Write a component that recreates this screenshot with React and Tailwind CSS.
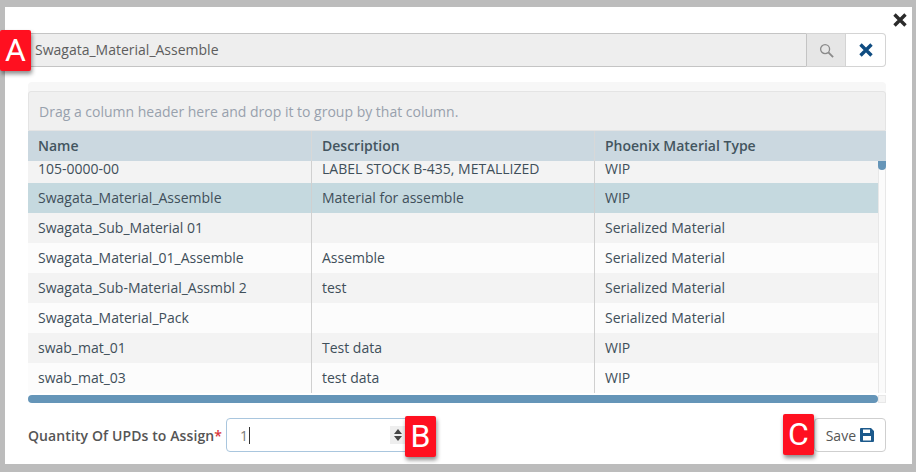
import React from 'react';

const rows = [
  { name: 'Swagata_Material_Assemble', desc: 'Material for assemble', type: 'WIP', selected: true },
  { name: 'Swagata_Sub_Material 01', desc: '', type: 'Serialized Material' },
  { name: 'Swagata_Material_01_Assemble', desc: 'Assemble', type: 'Serialized Material' },
  { name: 'Swagata_Sub-Material_Assmbl 2', desc: 'test', type: 'Serialized Material' },
  { name: 'Swagata_Material_Pack', desc: '', type: 'Serialized Material' },
  { name: 'swab_mat_01', desc: 'Test data', type: 'WIP' },
  { name: 'swab_mat_03', desc: 'test data', type: 'WIP' },
];

function Badge({ letter, className }) {
  return (
    <div className={`absolute w-[31px] h-[41px] bg-[#ff1020] rounded-[2px] text-white text-[32px] leading-[41px] text-center font-['Roboto',sans-serif] shadow-[1px_3px_4px_rgba(0,0,0,0.45)] ${className}`}>
      {letter}
    </div>
  );
}

function Cross({ className }) {
  return (
    <svg viewBox="0 0 14 14" className={className} fill="none" stroke="currentColor" strokeWidth="3.4">
      <path d="M1.5 1.5 12.5 12.5M12.5 1.5 1.5 12.5" />
    </svg>
  );
}

function Row({ name, desc, type, selected, index }) {
  const bg = selected ? 'bg-[#c5d9df]' : index % 2 === 1 ? 'bg-[#f3f3f3]' : 'bg-[#fcfcfc]';
  return (
    <div className={`grid grid-cols-[283px_283px_284px] h-[30px] text-[14px] leading-[30px] text-[#3f4f5a] ${bg}`}>
      <div className="pl-[10px] truncate">{name}</div>
      <div className="pl-[10px] border-l border-[#d0d0d0] truncate">{desc}</div>
      <div className="pl-[10px] border-l border-[#d0d0d0] truncate">{type}</div>
    </div>
  );
}

export default function App() {
  return (
    <div className="w-[916px] h-[472px] bg-[#bcbcbc] pt-[7px] pl-[5px] pr-[4px] pb-[8px] overflow-hidden font-['Open_Sans',sans-serif]">
      <div className="relative w-full h-full bg-white pl-[23px] pr-[26px] pt-[26px]">
        <Cross className="absolute right-[5px] top-[6px] w-[14px] h-[14px] text-[#2b2b2b]" />

        {/* search row */}
        <div className="flex h-[34px]">
          <div className="flex-1 bg-[#eeeeee] border border-[#c4c4c4] rounded-l-[3px] pl-[6px] text-[14px] leading-[32px] text-[#5d5d5d]">
            Swagata_Material_Assemble
          </div>
          <div className="w-[39px] bg-[#e6e6e6] border-y border-r border-[#d4d4d4] flex items-center justify-center text-[#8a8a8a]">
            <svg viewBox="0 0 16 16" className="w-[15px] h-[15px]" fill="none" stroke="currentColor">
              <circle cx="6.5" cy="6.5" r="4.8" strokeWidth="1.4" />
              <path d="M10 10l5 5" strokeWidth="2" />
            </svg>
          </div>
          <div className="w-[40px] bg-white border-y border-r border-[#d4d4d4] rounded-r-[4px] flex items-center justify-center">
            <Cross className="w-[14px] h-[14px] text-[#0f4c81]" />
          </div>
        </div>

        {/* grid */}
        <div className="mt-[15px] bg-[#f7f7f7] rounded-t-[4px] pt-[9px]">
          <div className="h-[40px] bg-[#f0f0f0] border border-[#e4e4e4] rounded-t-[3px] pl-[10px] text-[14px] leading-[39px] text-[#98a1ad]">
            Drag a column header here and drop it to group by that column.
          </div>
          <div className="grid grid-cols-[283px_283px_292px] h-[30px] bg-[#cbd8e0] text-[14px] font-semibold leading-[30px] text-[#43555f]">
            <div className="pl-[10px]">Name</div>
            <div className="pl-[10px] border-l border-[#d8d8d8]">Description</div>
            <div className="pl-[10px] border-l border-[#d8d8d8]">Phoenix Material Type</div>
          </div>
        </div>
        <div className="relative bg-white">
          <div className="flex">
            <div className="w-[850px]">
              <div className="grid grid-cols-[283px_283px_284px] h-[22px] bg-[#f3f3f3] text-[14px] leading-[16px] text-[#3f4f5a] overflow-hidden">
                <div className="pl-[10px]">105-0000-00</div>
                <div className="pl-[10px] border-l border-[#d0d0d0]">LABEL STOCK B-435, METALLIZED</div>
                <div className="pl-[10px] border-l border-[#d0d0d0]">WIP</div>
              </div>
              {rows.map((r, i) => (
                <Row key={r.name} {...r} index={i} />
              ))}
            </div>
            <div className="w-[8px] bg-[#fbfbfb] border-x border-[#e8e8e8]">
              <div className="h-[9px] bg-[#6595b8] rounded-b-[4px] w-[8px] -ml-px" />
            </div>
          </div>
          <div className="flex h-[10px] pt-[2px]">
            <div className="w-[850px] h-[8px] bg-[#6595b8] rounded-[4px]" />
            <div className="w-[8px] h-[8px] bg-[#f5f5f5] border border-[#e8e8e8]" />
          </div>
        </div>

        {/* footer */}
        <div className="flex items-center mt-[15px] h-[34px]">
          <div className="text-[14px] font-semibold text-[#555555] tracking-[0.1px]">
            Quantity Of UPDs to Assign<span className="text-[#d9343a]">*</span>
          </div>
          <div className="ml-[4px] w-[190px] h-[34px] border border-[#a9c6de] rounded-[4px] flex items-center justify-between pl-[13px] pr-[10px] text-[14px] text-[#7b7b7b]">
            <span className="flex items-center">
              1<span className="inline-block w-px h-[17px] bg-[#333333] ml-px" />
            </span>
            <span className="w-[15px] h-[18px] bg-[#eeeeee] flex flex-col items-center justify-center gap-[2px]">
              <svg viewBox="0 0 8 5" className="w-[8px] h-[5px] text-[#444444]" fill="currentColor"><path d="M4 0 8 5H0z" /></svg>
              <svg viewBox="0 0 8 5" className="w-[8px] h-[5px] text-[#444444]" fill="currentColor"><path d="M0 0H8L4 5z" /></svg>
            </span>
          </div>
          <div className="ml-auto w-[72px] h-[34px] border border-[#cfcfcf] rounded-[4px] flex items-center justify-end gap-[4px] pr-[11px] text-[14px] text-[#555555]">
            Save
            <svg viewBox="0 0 14 14" className="w-[14px] h-[14px] text-[#1d5a8c]" fill="currentColor">
              <path fillRule="evenodd" d="M1 0h10l3 3v10a1 1 0 0 1-1 1H1a1 1 0 0 1-1-1V1a1 1 0 0 1 1-1zm2 1.5v3.5h7V1.5zM3 8v4.5h8V8z" />
            </svg>
          </div>
        </div>

        <Badge letter="A" className="left-[-5px] top-[23px]" />
        <Badge letter="B" className="left-[400px] top-[409px]" />
        <Badge letter="C" className="left-[778px] top-[407px]" />
      </div>
    </div>
  );
}
